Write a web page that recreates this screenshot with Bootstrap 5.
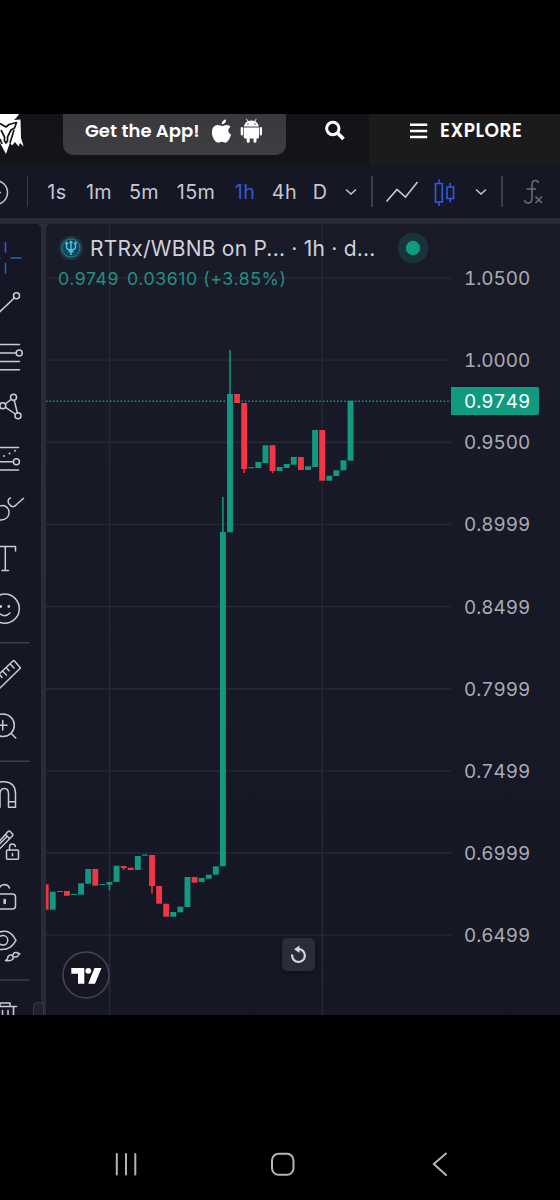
<!DOCTYPE html>
<html lang="en">
<head>
<meta charset="utf-8">
<meta name="viewport" content="width=device-width, initial-scale=1">
<title>RTRx/WBNB</title>
<link rel="stylesheet" href="https://cdn.jsdelivr.net/npm/bootstrap@5.3.0/dist/css/bootstrap.min.css">
<style>
body{font-family:Inter,"Liberation Sans",sans-serif;background:#000;width:560px;height:1200px;overflow:hidden}
svg{display:block;flex:none}
.status-gap{height:114px;flex:none}
.site-head{height:51px;flex:none;background:#131318;font-family:"Poppins",Inter,sans-serif;color:#fff}
.logo-cell{width:63px}
.app-pill{width:223px;height:41px;background:linear-gradient(#38383d,#3e3e43);border-radius:0 0 10px 10px;padding-left:22px}
.app-text{font-size:18px;font-weight:600;width:117px;line-height:34px;letter-spacing:.05px}
.search-cell{width:83px}
.explore{background:#1b1b1b;padding-left:41px;height:51px}
.explore-text{font-size:18.5px;font-weight:600;line-height:34px;margin-left:12px;letter-spacing:.55px}
.tool-row{display:grid;grid-template-columns:19px 17px 42px 42px 48px 56px 42px 37px 34px 28px 14px 46px 38px 36px 6px 55px;height:53px;flex:none;background:#151725;color:#c5c7d2;font-size:19.8px;letter-spacing:.4px;overflow:hidden}
.tool-row>*{display:flex;align-items:center;justify-content:center;white-space:nowrap}
.tool-row .iv{padding-top:2px}
.tool-row .on{color:#3159d8}
.rule-v{width:1.5px;height:31px;background:#3b3d4b}
.work{height:797px;flex:none;background:#2a2b39;padding-top:6px;overflow:hidden}
.side{width:41px;background:#151725;border-radius:0 5px 0 0;overflow:hidden}
.side svg{fill:none;stroke:#c9cbd5;stroke-width:1.5;stroke-linecap:round;stroke-linejoin:round}
.side .rule{stroke:#3d3f4d}
.gutter{width:5px}
.grip{left:-8px;bottom:0;width:11px;height:13px;border:1.5px solid #3a3b49;border-bottom:0;border-radius:5px 5px 0 0;background:#20212f}
.chart{background:linear-gradient(#1a1b29,#171927 45%,#151725);border-radius:5px 0 0 0;overflow:hidden}
.legend{left:12px;top:7px;width:371px;color:#d0d1db}
.pair{font-size:21px;line-height:35px;height:34px}
.pair-name{margin-left:6px;letter-spacing:.23px}
.vals{font-size:17.7px;line-height:28px;color:#22907f;letter-spacing:.56px}
.axis{right:0;top:14px;width:109px;color:#a9abb5;font-size:18.9px;font-variant-numeric:tabular-nums}
.axis div{height:82.14px;line-height:82.14px;padding-left:13px}
.last{left:405px;top:163px;width:88px;height:28px;background:#109a80;color:#fff;border-radius:0 2px 2px 0;padding-left:13px;font-size:18.9px;line-height:30px;font-variant-numeric:tabular-nums}
.reset{left:236px;top:714px;width:33px;height:33px;background:#2b2c39;border-radius:5px;box-shadow:0 2px 5px #0006}
.tv{left:16px;top:727px}
.sys{height:185px;padding-top:134px;padding-left:114px}
</style>
</head>
<body class="d-flex flex-column">
<div class="status-gap"></div>
<header class="site-head d-flex align-items-start">
  <div class="logo-cell">
    <svg width="30" height="44" viewBox="0 114 30 44"><path fill="#fff" d="M0 114H19L17 117L14 120L20.500 119.500L21 138L23.700 146.500L20 143L18.500 146.500L15 142L12 145.500L10 142.500L6 154L0 143Z"/><path fill="none" stroke="#131318" stroke-width="1.700" stroke-linejoin="round" d="M0 123.500L6 127L9 124.500L16.500 122.500L14.500 128L11 130L7.500 137V141L6 143L4.500 141V137L1 130M14 130L10 143M0 139L2 144"/></svg>
  </div>
  <div class="app-pill d-flex">
    <span class="app-text text-nowrap">Get the App!</span>
    <svg width="80" height="41" viewBox="202 114 80 41" fill="#fff">
      <path d="M226 119.300Q226.500 123.500 221.700 124.500Q221.500 120.500 226 119.300ZM222 126C223.500 126 225 124.800 227 124.900C228.700 125 229.800 125.800 230.500 126.800C227.300 128.900 227.800 133.200 231 134.500C230.200 137.500 227.800 142.700 225.500 142.700C224 142.700 223.500 141.800 221.800 141.800C220.100 141.800 219.500 142.700 218.200 142.700C215 142.700 212 137 211.900 132.600C211.800 127.800 214.500 125 217.600 125C219.500 125 220.800 126 222 126Z"/>
      <path d="M243.700 126.500Q244.400 122.800 247.500 121.300L246 119L246.700 118.700L248.300 121Q251.500 120 254.500 121L256 118.700L256.700 119L255.300 121.300Q258.500 123 259 126.500ZM243.700 127.500H259V137Q259 138.500 257.500 138.500H256.500V141.300Q256.500 142.800 255 142.800Q253.500 142.800 253.500 141.300V138.500H249.700V141.300Q249.700 142.800 248.200 142.800Q246.700 142.800 246.700 141.300V138.500H245.200Q243.700 138.500 243.700 137Z"/><rect x="240.700" y="127" width="2.300" height="8.500" rx="1.100"/><rect x="259.700" y="127" width="2.300" height="8.500" rx="1.100"/><circle cx="248" cy="124" r=".8" fill="#555"/><circle cx="255" cy="124" r=".8" fill="#555"/>
    </svg>
  </div>
  <div class="search-cell">
    <svg width="83" height="40" viewBox="286 114 83 40" fill="none" stroke="#fff" stroke-width="3"><circle cx="332.800" cy="128.500" r="6.200"/><path d="M337.500 133L343.500 139" stroke-width="3.700"/></svg>
  </div>
  <div class="explore d-flex flex-fill">
    <svg width="18" height="32" viewBox="410 114 18 32" stroke="#fff" stroke-width="2.500"><path d="M410 124.800H427.200M410 130.900H427.200M410 137H427.200"/></svg>
    <span class="explore-text">EXPLORE</span>
  </div>
</header>

<nav class="tool-row">
  <div class="justify-content-start"><svg width="16" height="30" viewBox="0 0 16 30" fill="none" stroke="#c5c7d2" stroke-width="1.500"><circle cx="-4.500" cy="15.500" r="12"/><path d="M-4 15.500H1"/></svg></div>
  <div><i class="rule-v"></i></div>
  <div class="iv">1s</div><div class="iv">1m</div><div class="iv">5m</div><div class="iv">15m</div><div class="iv on">1h</div><div class="iv">4h</div><div class="iv">D</div>
  <div><svg width="12" height="8" viewBox="0 0 12 8" fill="none" stroke="#c5c7d2" stroke-width="1.500"><path d="M1 1.500L6 6L11 1.500"/></svg></div>
  <div><i class="rule-v"></i></div>
  <div><svg width="34" height="24" viewBox="0 0 34 24" fill="none" stroke="#c5c7d2" stroke-width="1.600"><path d="M1.500 21.500L12 9.500L20.500 17L32.500 2"/></svg></div>
  <div><svg width="22" height="30" viewBox="-1 0 22 30" fill="none" stroke="#3159d8" stroke-width="1.700"><path d="M1.500 6.500H8.300V25H1.500ZM5 6.500V2.500M5 25V29M13 10H19.500V21.500H13ZM16.200 10V6M16.200 21.500V25.500"/></svg></div>
  <div><svg width="12" height="8" viewBox="0 0 12 8" fill="none" stroke="#c5c7d2" stroke-width="1.500"><path d="M1 1.500L6 6L11 1.500"/></svg></div>
  <div><i class="rule-v"></i></div>
  <div><svg width="20" height="26" viewBox="524 179 20 26" fill="none" stroke="#6c6e79" stroke-width="1.500"><path d="M539.500 183Q539 180.500 536.500 180.500Q533 180.500 533 185V198Q533 203 529 203Q526 203 525.500 200M527.500 189H537M536.500 196.500L543 203M543 196.500L536.500 203"/></svg></div>
</nav>

<main class="work d-flex">
  <aside class="side flex-shrink-0">
    <svg width="41" height="56" viewBox="0 224 41 56" style="stroke:#3159d8"><path d="M5.500 242.500V252M5.500 263.500V273M0 258H0M11 258H21"/></svg>
    <svg width="41" height="50" viewBox="0 280 41 50"><circle cx="16.500" cy="295.800" r="3"/><path d="M14.300 298L-3 314.500"/></svg>
    <svg width="41" height="52" viewBox="0 330 41 52"><path d="M-1 344.500H19.500M-1 353H16M-1 361.500H19.500M-1 369.700H19.500"/><circle cx="19.200" cy="353" r="3"/></svg>
    <svg width="41" height="50" viewBox="0 382 41 50"><circle cx="13.500" cy="397.300" r="3"/><circle cx="2.800" cy="405.800" r="3"/><circle cx="18" cy="415.700" r="3"/><path d="M5.200 404L11 399.500M14.200 400.300L17.300 412.700M5.500 407.300L15.300 414M0 404L-3 394M.5 408L-4 412"/></svg>
    <svg width="41" height="52" viewBox="0 432 41 52"><path d="M-1 447.500H18.500M-1 461.700H13.300M-1 470H18.500"/><circle cx="16.400" cy="461.700" r="3"/><path d="M4 456H4M9.500 453.500H9.500M15 450.700H15" stroke-width="2"/></svg>
    <svg width="41" height="50" viewBox="0 484 41 50"><path d="M-2 507.500Q1 504.500 4.500 505.800Q9.500 508 9 513Q8.500 519.500 1 520H-2M10.500 498C7.500 499 7.500 502.500 9.500 504.500C11.500 507.500 14.500 507 16 505L23.500 498.200"/></svg>
    <svg width="41" height="50" viewBox="0 534 41 50"><path d="M-6 546.500H15.500V551M5.300 546.500V570.500M2 570.500H8.500"/></svg>
    <svg width="41" height="50" viewBox="0 584 41 50"><circle cx="4.700" cy="608.700" r="14.600"/><path d="M-1 613Q4.500 618.500 10 613"/><path d="M.7 606.500H.7M8.800 606.500H8.800" stroke-width="2.800"/></svg>
    <svg width="41" height="16" viewBox="0 634 41 16"><path class="rule" d="M-2 642.700H29"/></svg>
    <svg width="41" height="50" viewBox="0 650 41 50"><path d="M-2 690L20.500 668L14.500 661Q13.700 660.300 12.900 661L-3 676M10.500 664.300L14 668M6.500 668L9 670.700M3 671.500L6.500 675M0 675L2 677.500"/></svg>
    <svg width="41" height="50" viewBox="0 700 41 50"><circle cx="3" cy="725.200" r="11.300"/><path d="M11 733.300L15.700 738M-2 725.200H7M2.700 720.500V730"/></svg>
    <svg width="41" height="20" viewBox="0 750 41 20"><path class="rule" d="M-2 761.300H29"/></svg>
    <svg width="41" height="50" viewBox="0 770 41 50"><path d="M-5 784.500Q0 781 5 781.800Q15.500 783 15.500 793.500V807.300H8.500V794Q8.500 788.500 4.500 788.500Q0 788.500 0 794V807.300H-5M8.500 801.800H15.500M0 801.800H-3"/></svg>
    <svg width="41" height="52" viewBox="0 820 41 52"><path d="M-2 843L8 831.500Q9 830.300 10.200 831.500L12.500 834Q13.300 835 12.300 836L-2 850.500M5.500 834.500L9.500 838.500M-2 845.500L7 836.500"/><rect x="6.500" y="850" width="12" height="9.300" rx="1"/><path d="M9.500 850V847Q9.500 844 12.300 844Q15 844 15.300 846.500M12.500 853.500V855.800"/></svg>
    <svg width="41" height="50" viewBox="0 872 41 50"><path d="M-3 894H12.500Q15.500 894 15.500 897V906Q15.500 909 12.500 909H-3M-1 894V889Q0 884.500 5 884.500Q8.500 885 9.500 888"/><path d="M4.700 900V903" stroke-width="2.600"/></svg>
    <svg width="41" height="50" viewBox="0 922 41 50"><path d="M-4 934Q8 926 16 940.300Q11 949.500 2 949.500H-2"/><circle cx="3" cy="940.300" r="4.800"/><path d="M5.500 960.500Q8 959.500 8 956.500Q9.500 954.500 12 955.300Q14 957 12.800 959.300Q10.500 961.500 5.500 960.500ZM13 955Q13.500 952 16.500 952.500M14.500 957Q17.500 957.500 18.500 955M16.500 952.500L20 954"/></svg>
    <svg width="41" height="18" viewBox="0 972 41 18"><path class="rule" d="M-2 980H29"/></svg>
    <svg width="41" height="25" viewBox="0 990 41 25"><path d="M-2 1006.500H16.500M0 1006V1003H10V1006M13.500 1006.500V1016M2.500 1010.500V1016M8 1010.500V1016"/></svg>
  </aside>
  <div class="gutter position-relative flex-shrink-0"><div class="grip position-absolute"></div></div>
  <section class="chart position-relative flex-fill">
    <svg id="plot" width="514" height="791" viewBox="46 224 514 791"></svg>
    <div class="legend position-absolute">
      <div class="pair d-flex align-items-center text-nowrap">
        <svg width="26" height="26" viewBox="0 0 26 26"><circle cx="13" cy="13" r="12" fill="#233540"/><circle cx="13" cy="13" r="9" fill="#10465c" stroke="#2d8590"/><path fill="none" stroke="#3fc9dc" stroke-width="1.500" d="M8.500 8V11.500Q8.500 15 13 15Q17.500 15 17.500 11.500V8M13 6.500V20M10.500 16.500H15.500M7.500 9L8.500 7.500L10 9M16 9L17.500 7.500L18.500 9M11.500 8L13 6.500L14.500 8"/></svg>
        <span class="pair-name">RTRx/WBNB on P... · 1h · d...</span>
        <svg class="ms-auto" width="32" height="32" viewBox="0 0 32 32"><circle cx="16" cy="16" r="15.300" fill="#1a3239"/><circle cx="16" cy="16" r="7.200" fill="#109a80"/></svg>
      </div>
      <div class="vals text-nowrap"><span>0.9749</span><span class="ms-2">0.03610 (+3.85%)</span></div>
    </div>
    <div class="axis position-absolute"><div>1.0500</div><div>1.0000</div><div>0.9500</div><div>0.8999</div><div>0.8499</div><div>0.7999</div><div>0.7499</div><div>0.6999</div><div>0.6499</div></div>
    <div class="last position-absolute">0.9749</div>
    <div class="reset position-absolute d-flex align-items-center justify-content-center"><svg width="19" height="19" viewBox="0 0 19 19"><path fill="none" stroke="#d5d6df" stroke-width="2.200" d="M3.200 9.500A6.400 6.400 0 1 0 9 4.200"/><path fill="#d5d6df" d="M5 4.300L10.500 .5V8Z"/></svg></div>
    <svg class="tv position-absolute" width="48" height="48" viewBox="0 0 48 48"><circle cx="24" cy="24" r="23" fill="#151622" stroke="#444550" stroke-width="1.600"/><path fill="#fff" d="M9.300 17H22.300V32.700H16V22.700H9.300ZM32.500 17H39.500L33 32.700H26.200Z"/><circle cx="26.300" cy="19.800" r="2.900" fill="#fff"/></svg>
  </section>
</main>

<footer class="sys flex-shrink-0">
  <svg width="340" height="30" viewBox="114 1149 340 30" fill="none" stroke="#b4b4b4" stroke-width="2" stroke-linecap="round" stroke-linejoin="round"><path d="M116.800 1154V1174.500M126 1154V1174.500M135.300 1154V1174.500M446 1153.500L433.800 1164L446 1175"/><rect x="272" y="1153.800" width="21.500" height="21" rx="6.500"/></svg>
</footer>
<script>
// [slot, top, bottom, colour, wick top, wick bottom]
const candles=[[-1,884.3,909.7,'r'],[0,891.7,909.7,'g'],[1,891,892,'g'],[2,891,895.7,'r'],[3,894,895,'g'],[4,883.3,894.7,'g'],[5,869,883.7,'g'],[6,869,885.7,'r'],[7,884,885,'g'],[8,882,884.7,'g',882,890.3],[9,865.7,882,'g'],[10,866,868,'r',866,870],[11,867.7,870,'r'],[12,856,870,'g'],[13,854.5,855.7,'g'],[14,855,886,'r',855,893.7],[15,886,903.7,'r'],[16,903.7,916.7,'r'],[17,912,916.7,'g'],[18,906.7,912.3,'g'],[19,877,907,'g'],[20,877,882.7,'r'],[21,878,882,'g'],[22,874.7,878.7,'g'],[23,866.3,874.7,'g'],[24,532,866.3,'g',497,532],[25,394,532.3,'g',350,394],[26,394,403,'r'],[27,403,469,'r',403,473],[28,467.2,468.3,'g'],[29,462,468,'g'],[30,445.3,463,'g'],[31,445.3,471,'r',445,473],[32,467,471,'g'],[33,464,468,'g'],[34,457,464.7,'g'],[35,457,470,'r'],[36,466.3,470,'g'],[37,430,467,'g'],[38,430,480.7,'r'],[39,475.7,480.7,'g'],[40,470.3,476,'g'],[41,460.3,470.3,'g'],[42,400.7,460.7,'g']];
let out='<path stroke="#262834" stroke-width="1.4" fill="none" d="M109.500 224V1015M322.300 224V1015';
for(let i=0;i<9;i++)out+='M46 '+(278+82.14*i)+'H451';
out+='"/><path d="M46 401.300H451" stroke="#1f9684" stroke-width="1.400" stroke-dasharray="1.500 2.050"/>';
for(const [i,t,b,k,wt,wb] of candles){
  const x=49.8+7.09*i,c=k==='g'?'#129a80':'#f23645';
  if(wt)out+=`<rect x="${x+2.2}" y="${wt}" width="1.500" height="${wb-wt}" fill="${c}"/>`;
  out+=`<rect x="${x}" y="${t}" width="5.900" height="${b-t}" fill="${c}"/>`;
}
document.getElementById('plot').innerHTML=out;
</script>
<script src="https://cdn.jsdelivr.net/npm/bootstrap@5.3.0/dist/js/bootstrap.bundle.min.js"></script>
</body>
</html>
